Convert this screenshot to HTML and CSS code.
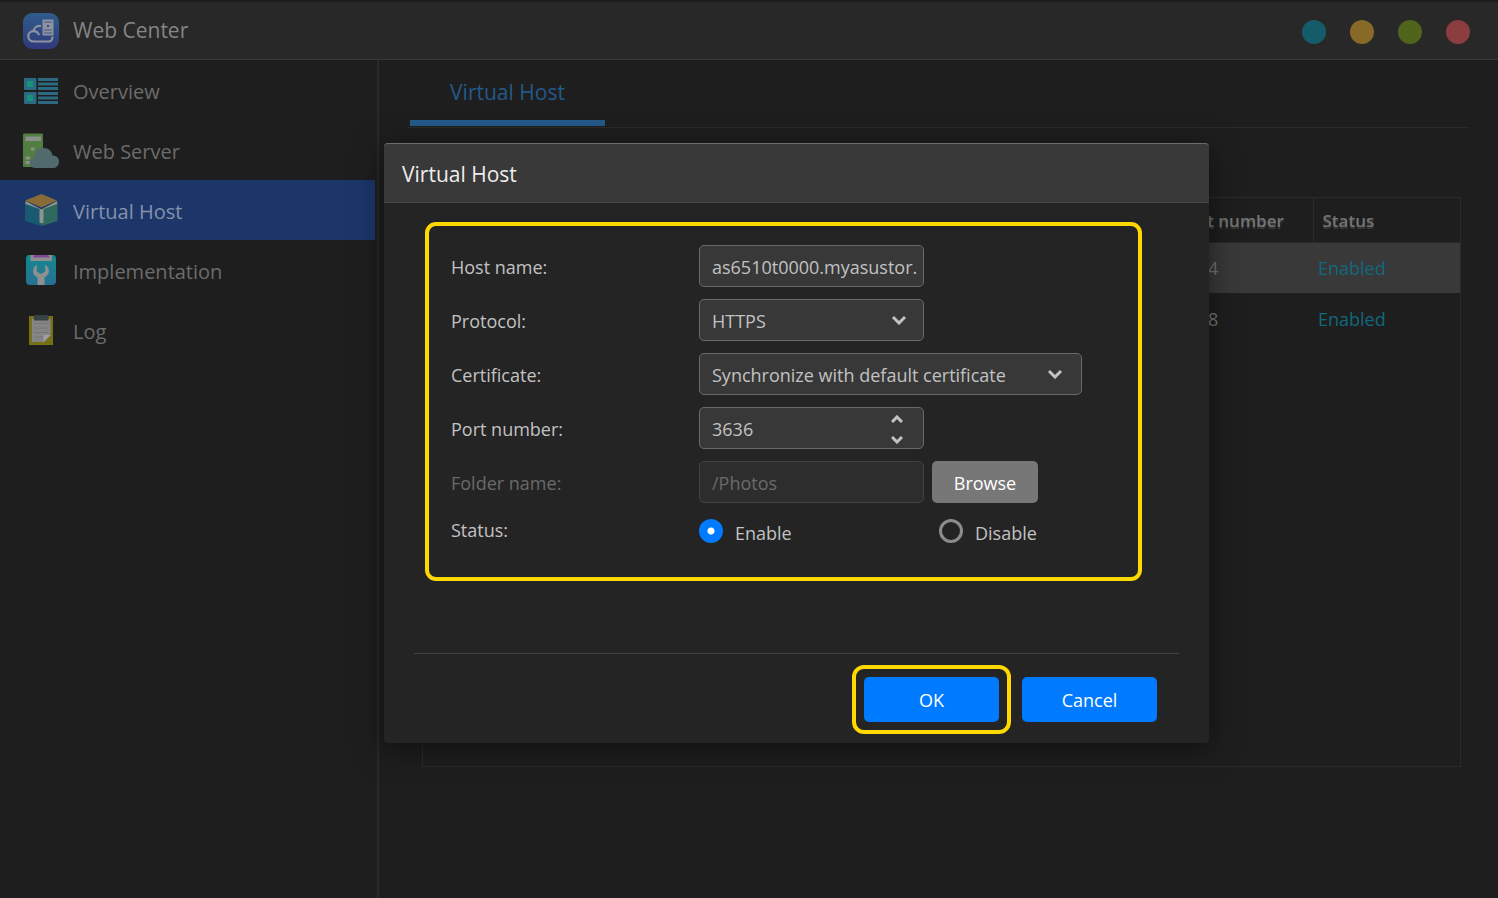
FILE: index.html
```html
<!DOCTYPE html>
<html lang="en">
<head>
<meta charset="utf-8">
<title>Web Center</title>
<link rel="stylesheet" href="styles.css">
</head>
<body>
<div class="app">
  <header class="titlebar">
    <svg class="logo" viewBox="0 0 36 36" aria-hidden="true">
      <defs><linearGradient id="logo-bg" x1="0" y1="0" x2="0" y2="1"><stop offset="0" stop-color="#2f5c8c"/><stop offset="1" stop-color="#30397c"/></linearGradient></defs>
      <rect width="36" height="36" rx="9" fill="url(#logo-bg)"/>
      <path d="M29.500 23.500c0 3-1.500 5-4 5H10.500a5.200 5.200 0 0 1 0-10.400c3 0 4.800 1.600 5.500 4M10.500 18c.5-3.300 3.500-5.300 7.500-5" fill="none" stroke="#8d92a0" stroke-width="2.200"/>
      <path d="M19.500 6.500h11v16h-11z" fill="#8d92a0"/>
      <path d="M21 9h8M21 17h8M21 20h8" stroke="#4a5688" stroke-width="1"/>
      <rect x="24" y="12" width="2" height="2" fill="#34457e"/>
    </svg>
    <h1 class="app-name">Web Center</h1>
    <div class="window-buttons">
      <button class="dot teal" aria-label="Help"></button>
      <button class="dot amber" aria-label="Minimize"></button>
      <button class="dot green" aria-label="Maximize"></button>
      <button class="dot red" aria-label="Close"></button>
    </div>
  </header>
  <div class="columns">
    <nav class="sidebar">
      <a class="nav-item" href="#overview">
        <svg class="nav-icon" viewBox="0 0 36 36" aria-hidden="true">
          <g fill="#2b6a80"><rect x="1" y="5" width="12.500" height="12" rx="1"/><rect x="1" y="19" width="12.500" height="12" rx="1"/><path d="M15 5h20v3H15zM15 9.500h20v3H15zM15 14h20v3H15zM15 19h20v3H15zM15 23.500h20v3H15zM15 28h20v3H15z"/></g>
          <path d="M4 8h6v6H4zM4 22h6v6H4z" fill="#16927c"/>
        </svg>
        <span>Overview</span>
      </a>
      <a class="nav-item" href="#web-server">
        <svg class="nav-icon" viewBox="0 0 36 36" aria-hidden="true">
          <rect y="0.500" width="20" height="33.500" rx="1" fill="#527d43"/>
          <path d="M2.500 3.500H18V8H2.500zM8 14.500h3.500v3H8zM2.500 23.500H7v3H2.500zM2.500 28H7v3H2.500z" fill="#8b8f89"/>
          <path d="M12 35c-7 0-7.500-9-.5-10.500 0-6 4-9.500 9-9.500s8.500 3 9 7.500c4 0 6.500 2.500 6.500 6S33.500 35 31 35z" fill="#506a6e"/>
        </svg>
        <span>Web Server</span>
      </a>
      <a class="nav-item selected" href="#virtual-host" aria-current="page">
        <svg class="nav-icon" viewBox="0 0 36 36" aria-hidden="true">
          <path d="M2 9l16.500 7v17L2 28z" fill="#195a72"/>
          <path d="M34.500 9l-16 7v17l16-5z" fill="#30695e"/>
          <path d="M2.500 8l16 8.500 15.500-8.500v3l-13.500 5v13.500l-2 1-2-1V16l-14-5z" fill="#8f928f"/>
          <path d="M2 7.500L18.500 1 34 7.500 18.500 14.500z" fill="#876c38"/>
        </svg>
        <span>Virtual Host</span>
      </a>
      <a class="nav-item" href="#implementation">
        <svg class="nav-icon" viewBox="0 0 36 36" aria-hidden="true">
          <defs><linearGradient id="tool-bg" x1="0" y1="0" x2="0" y2="1"><stop offset="0" stop-color="#128a8e"/><stop offset="1" stop-color="#286f94"/></linearGradient></defs>
          <path d="M6 2h24q3 0 3 4v22q0 4-4 4H7q-4 0-4-4V6q0-4 3-4z" fill="url(#tool-bg)"/>
          <path d="M7.500 2h21.500v6H7.500z" fill="#8e908f"/>
          <path d="M12 2h12.500q2 0 2 2.500H10Q10 2 12 2z" fill="#81489a"/>
          <path d="M13.800 11.500v7l4.200 2.500 4.200-2.500v-7c5.300 3.500 4.800 10.500-.7 13V32h-7v-7.500c-5.500-2.500-6-9.500-.7-13z" fill="#8e908f"/>
        </svg>
        <span>Implementation</span>
      </a>
      <a class="nav-item" href="#log">
        <svg class="nav-icon" viewBox="0 0 36 36" aria-hidden="true">
          <path d="M6 3h24v29H6z" fill="#767018"/>
          <path d="M9 6h18.500v16.500L21 29H9z" fill="#858585"/>
          <path d="M11 10.500h14M11 15h14M11 19.500h14M11 24h9" stroke="#747678" stroke-width="1"/>
          <path d="M27.500 22l-7 7v-7z" fill="#a0a0a0"/>
          <path d="M11 3.500Q11 2 12.500 2H24q1.500 0 1.500 1.500v4H11z" fill="#374244"/>
        </svg>
        <span>Log</span>
      </a>
    </nav>
    <main class="content">
      <div class="tabs" role="tablist"><button class="tab" role="tab" aria-selected="true">Virtual Host</button></div>
      <div class="grid-box">
        <table class="hosts">
          <colgroup><col><col class="col-port"><col class="col-status"></colgroup>
          <thead><tr><td></td><th scope="col">Port number</th><th scope="col">Status</th></tr></thead>
          <tbody>
            <tr class="picked"><td></td><td class="port">4</td><td class="state">Enabled</td></tr>
            <tr><td></td><td class="port">8</td><td class="state">Enabled</td></tr>
          </tbody>
        </table>
      </div>
    </main>
  </div>

  <form class="dialog" role="dialog" aria-labelledby="dialog-title">
    <h2 class="dialog-title" id="dialog-title">Virtual Host</h2>
    <div class="dialog-body">
      <div class="fields">
        <label for="host">Host name:</label>
        <input class="field" id="host" type="text" value="as6510t0000.myasustor.">
        <label for="protocol">Protocol:</label>
        <div class="control">
          <select class="field" id="protocol"><option>HTTPS</option></select>
          <svg class="chevron" viewBox="0 0 16 10" aria-hidden="true"><path d="M2 2l6 6 6-6"/></svg>
        </div>
        <label for="certificate">Certificate:</label>
        <div class="control wide">
          <select class="field" id="certificate"><option>Synchronize with default certificate</option></select>
          <svg class="chevron" viewBox="0 0 16 10" aria-hidden="true"><path d="M2 2l6 6 6-6"/></svg>
        </div>
        <label for="port">Port number:</label>
        <div class="control">
          <input class="field" id="port" type="text" inputmode="numeric" value="3636">
          <div class="spinner">
            <button type="button" aria-label="Increase"><svg viewBox="0 0 12 8" aria-hidden="true"><path d="M1 7l5-5 5 5"/></svg></button>
            <button type="button" aria-label="Decrease"><svg viewBox="0 0 12 8" aria-hidden="true"><path d="M1 1l5 5 5-5"/></svg></button>
          </div>
        </div>
        <label class="muted" for="folder">Folder name:</label>
        <div class="folder">
          <input class="field" id="folder" type="text" value="/Photos" disabled>
          <button class="browse" type="button">Browse</button>
        </div>
        <span class="status-label" id="status-label">Status:</span>
        <div class="radios" role="radiogroup" aria-labelledby="status-label">
          <label class="choice"><input type="radio" name="status" checked><span>Enable</span></label>
          <label class="choice"><input type="radio" name="status"><span>Disable</span></label>
        </div>
      </div>
    </div>
    <footer class="dialog-footer">
      <div class="highlight"><button class="action" type="button">OK</button></div>
      <button class="action" type="button">Cancel</button>
    </footer>
  </form>
</div>
</body>
</html>
```

FILE: styles.css
```css
* { box-sizing: border-box; }

body {
  margin: 0;
  background: #1e1e1e;
  color: #c2c2c2;
  font: 18px/26px "Open Sans", "Noto Sans", sans-serif;
}

button, input, select { font: inherit; color: inherit; margin: 0; }
button { border: 0; padding: 0; background: none; }
h1, h2 { margin: 0; font-weight: 400; }

.app {
  position: relative;
  display: flex;
  flex-direction: column;
  min-height: 100vh;
}

.titlebar {
  display: flex;
  align-items: center;
  height: 60px;
  padding: 0 28px 0 23px;
  background: #282828;
  border-top: 2px solid #1c1c1c;
  border-bottom: 1px solid #383838;
}
.logo { width: 36px; height: 36px; margin-right: 14px; }
.app-name { padding-bottom: 2px; font-size: 21px; color: #858585; }
.window-buttons { display: flex; gap: 24px; margin-left: auto; padding-top: 3px; }
.dot { width: 24px; height: 24px; border-radius: 50%; }
.teal { background: #155b69; }
.amber { background: #876a27; }
.green { background: #50651b; }
.red { background: #8b3d3f; }

.columns { display: flex; flex: 1; }

.sidebar {
  width: 379px;
  flex: none;
  padding-right: 2px;
  border-right: 2px solid #292929;
}
.nav-item {
  display: flex;
  align-items: center;
  gap: 14px;
  height: 60px;
  padding: 2px 0 0 23px;
  font-size: 20px;
  color: #6c6c6c;
  text-decoration: none;
}
.nav-item span { padding-top: 2px; }
.nav-item.selected { background: #1c366a; color: #8592aa; }
.nav-icon { width: 36px; height: 36px; }

.content {
  flex: 1;
  display: flex;
  flex-direction: column;
  min-width: 0;
  padding: 0 29px 131px 28px;
}
.tabs { display: flex; height: 68px; padding-left: 3px; border-bottom: 1px solid #2a2a2a; }
.tab {
  width: 195px;
  height: 66px;
  padding-top: 4px;
  border-bottom: 6px solid #23598a;
  color: #23598a;
  font-size: 21px;
}
.grid-box { flex: 1; margin: 69px 8px 0 15px; border: 1px solid #2b2b2b; }
.hosts { width: 100%; table-layout: fixed; border-collapse: collapse; text-align: left; color: #747474; }
.col-port { width: 143px; }
.col-status { width: 147px; }
.hosts th, .hosts td { padding: 0 0 0 9px; }
.hosts thead tr { height: 44px; border-bottom: 1px solid #2b2b2b; }
.hosts tbody tr { height: 51px; }
.hosts th { padding-top: 3px; font-weight: 600; font-size: 17px; white-space: nowrap; text-shadow: 0 2px 0 #3a3a3a; }
.hosts th + th { border-left: 1px solid #2b2b2b; }
.hosts .picked { background: #393939; }
.hosts .port { padding-left: 38px; }
.hosts .state { padding-left: 5px; color: #11687d; }

.dialog {
  position: absolute;
  top: 143px;
  left: 384px;
  display: flex;
  flex-direction: column;
  width: 825px;
  min-height: 600px;
  background: #242424;
  border-radius: 4px;
  box-shadow: 0 6px 30px rgba(0, 0, 0, 0.5);
}
.dialog-title {
  padding: 17px 18px 15px;
  border-top: 1px solid #6c6c6c;
  border-bottom: 1px solid #4a4a4a;
  border-radius: 4px 4px 0 0;
  background: #393939;
  color: #ededed;
  font-size: 21px;
}
.dialog-body { flex: 1; padding: 19px 67px 0 41px; }
.fields {
  display: grid;
  grid-template-columns: 248px 1fr;
  align-items: center;
  gap: 12px 0;
  padding: 19px 22px 30px;
  border: 4px solid #ffd800;
  border-radius: 11px;
}
.fields > label { padding-top: 2px; }
.status-label { padding-bottom: 2px; }
.muted { color: #6a6a6a; }
.field {
  width: 225px;
  height: 42px;
  padding: 2px 0 0 12px;
  border: 1px solid #6a6a6a;
  border-radius: 5px;
  background: #383838;
  appearance: none;
  outline: 0;
}
.field:disabled { background: #2d2d2d; border-color: #424242; color: #6a6a6a; opacity: 1; }
.control { position: relative; width: 225px; }
.control.wide { width: 383px; }
.control .field { display: block; width: 100%; }
.chevron {
  position: absolute;
  top: 16px;
  right: 17px;
  width: 16px;
  height: 10px;
  pointer-events: none;
}
.wide .chevron { right: 19px; }
.chevron path, .spinner path { fill: none; stroke: #c2c2c2; stroke-width: 3; }
.spinner {
  position: absolute;
  top: 8px;
  right: 21px;
  display: flex;
  flex-direction: column;
  gap: 13px;
}
.spinner button, .spinner svg { display: block; width: 12px; height: 8px; }
.folder { display: flex; gap: 8px; }
.browse { width: 106px; height: 42px; padding-top: 2px; border-radius: 5px; background: #777; color: #fff; font-weight: 500; }
.radios { display: flex; height: 32px; }
.choice { display: flex; align-items: center; gap: 12px; width: 240px; white-space: nowrap; }
.choice:last-child { width: auto; }
.choice span { padding-top: 4px; }
.choice input {
  width: 24px;
  height: 24px;
  appearance: none;
  border: 3px solid #8c8c8c;
  border-radius: 50%;
}
.choice input:checked { border: 0; background: radial-gradient(circle, #fff 3px, #007aff 4px); }

.dialog-footer {
  display: flex;
  justify-content: flex-end;
  align-items: center;
  gap: 11px;
  margin: 0 30px;
  padding: 11px 22px 9px 0;
  border-top: 1px solid #434343;
}
.highlight { padding: 8px; border: 4px solid #ffd800; border-radius: 12px; }
.action { display: block; width: 135px; height: 45px; border-radius: 5px; background: #007aff; color: #fff; }
```
